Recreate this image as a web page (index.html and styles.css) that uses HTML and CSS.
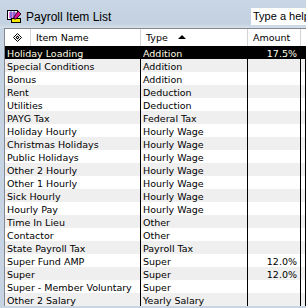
FILE: index.html
```html
<!DOCTYPE html>
<html>
<head>
<meta charset="utf-8">
<link rel="stylesheet" href="styles.css">
</head>
<body>
<div class="titlebar">
  <span class="appicon">
    <svg width="15" height="14" viewBox="0 0 15 14">
      <rect x="0.5" y="0.5" width="10" height="9" fill="#fff" stroke="#000"/>
      <path d="M2 3h7M2 5h7M2 7h5" stroke="#c000c0" stroke-width="1"/>
      <path d="M4 1v8M7 1v8" stroke="#3050d0" stroke-width="1"/>
      <rect x="4.5" y="8.5" width="9" height="4" fill="#f8e800" stroke="#000"/>
      <path d="M11 1l3 3-5 5-2 0 0-2z" fill="#e01090" stroke="#000" stroke-width="0.8"/>
    </svg>
  </span>
  <span class="title">Payroll Item List</span>
  <div class="help">Type a help</div>
</div>
<div class="list">
  <div class="head">
    <div class="hcell hicon">
      <svg width="9" height="9" viewBox="0 0 9 9">
        <path d="M4.5 0.5L8.5 4.5 4.5 8.5 0.5 4.5z" fill="#fff" stroke="#000"/>
        <path d="M4.5 2.5L6.5 4.5 4.5 6.5 2.5 4.5z" fill="#000"/>
        <rect x="4" y="4" width="1" height="1" fill="#fff"/>
      </svg>
    </div>
    <div class="hcell">Item Name</div>
    <div class="hcell">Type<span class="sortup"></span></div>
    <div class="hcell">Amount</div>
    <div class="hcell last"></div>
  </div>
  <div class="row sel"><div class="c">Holiday Loading</div><div class="c">Addition</div><div class="c amt">17.5%</div><div class="c"></div></div>
  <div class="row"><div class="c">Special Conditions</div><div class="c">Addition</div><div class="c amt"></div><div class="c"></div></div>
  <div class="row"><div class="c">Bonus</div><div class="c">Addition</div><div class="c amt"></div><div class="c"></div></div>
  <div class="row"><div class="c">Rent</div><div class="c">Deduction</div><div class="c amt"></div><div class="c"></div></div>
  <div class="row"><div class="c">Utilities</div><div class="c">Deduction</div><div class="c amt"></div><div class="c"></div></div>
  <div class="row"><div class="c">PAYG Tax</div><div class="c">Federal Tax</div><div class="c amt"></div><div class="c"></div></div>
  <div class="row"><div class="c">Holiday Hourly</div><div class="c">Hourly Wage</div><div class="c amt"></div><div class="c"></div></div>
  <div class="row"><div class="c">Christmas Holidays</div><div class="c">Hourly Wage</div><div class="c amt"></div><div class="c"></div></div>
  <div class="row"><div class="c">Public Holidays</div><div class="c">Hourly Wage</div><div class="c amt"></div><div class="c"></div></div>
  <div class="row"><div class="c">Other 2 Hourly</div><div class="c">Hourly Wage</div><div class="c amt"></div><div class="c"></div></div>
  <div class="row"><div class="c">Other 1 Hourly</div><div class="c">Hourly Wage</div><div class="c amt"></div><div class="c"></div></div>
  <div class="row"><div class="c">Sick Hourly</div><div class="c">Hourly Wage</div><div class="c amt"></div><div class="c"></div></div>
  <div class="row"><div class="c">Hourly Pay</div><div class="c">Hourly Wage</div><div class="c amt"></div><div class="c"></div></div>
  <div class="row"><div class="c">Time In Lieu</div><div class="c">Other</div><div class="c amt"></div><div class="c"></div></div>
  <div class="row"><div class="c">Contactor</div><div class="c">Other</div><div class="c amt"></div><div class="c"></div></div>
  <div class="row"><div class="c">State Payroll Tax</div><div class="c">Payroll Tax</div><div class="c amt"></div><div class="c"></div></div>
  <div class="row"><div class="c">Super Fund AMP</div><div class="c">Super</div><div class="c amt">12.0%</div><div class="c"></div></div>
  <div class="row"><div class="c">Super</div><div class="c">Super</div><div class="c amt">12.0%</div><div class="c"></div></div>
  <div class="row"><div class="c">Super - Member Voluntary</div><div class="c">Super</div><div class="c amt"></div><div class="c"></div></div>
  <div class="row"><div class="c">Other 2 Salary</div><div class="c">Yearly Salary</div><div class="c amt"></div><div class="c"></div></div>
</div>
</body>
</html>
```

FILE: styles.css
```css
html, body {
  margin: 0;
  padding: 0;
}
body {
  width: 306px;
  height: 308px;
  overflow: hidden;
  background: #c6d4e3;
  font-family: "DejaVu Sans", sans-serif;
}
.titlebar {
  box-sizing: border-box;
  height: 28px;
  padding-top: 5px;
  padding-left: 7px;
  display: flex;
  align-items: center;
  background: linear-gradient(#c9d6e4, #c3d1e0 85%, #d6e0ea);
}
.appicon {
  display: flex;
  width: 15px;
  height: 14px;
}
.title {
  margin-left: 4px;
  font-family: "Liberation Sans", sans-serif;
  font-size: 12px;
  color: #000;
}
.help {
  margin-left: auto;
  box-sizing: border-box;
  width: 55px;
  height: 17px;
  background: #fff;
  font-family: "Liberation Sans", sans-serif;
  font-size: 11px;
  line-height: 17px;
  padding-left: 2px;
  white-space: nowrap;
  overflow: hidden;
}
.list {
  margin-left: 4px;
  border-top: 1px solid #828790;
  border-left: 1px solid #828790;
  background: #fff;
  font-size: 9.5px;
  color: #000;
}
.head {
  display: grid;
  grid-template-columns: 26px 110px 107px 53px 1fr;
  height: 17px;
  background: #fff;
}
.hcell {
  box-sizing: border-box;
  border-right: 1px solid #d5d5d5;
  padding-left: 5px;
  line-height: 16px;
  white-space: nowrap;
  display: flex;
  align-items: center;
}
.hcell.hicon {
  padding-left: 0;
  justify-content: center;
}
.hcell.last {
  border-right: none;
}
.sortup {
  display: inline-block;
  width: 0;
  height: 0;
  margin-left: 10px;
  margin-top: -1px;
  border-left: 4px solid transparent;
  border-right: 4px solid transparent;
  border-bottom: 4px solid #000;
}
.row {
  display: grid;
  grid-template-columns: 136px 107px 53px 1fr;
  height: 13px;
  background: #fff;
}
.row:nth-child(odd) {
  background: #efefef;
}
.row.sel {
  background: #000;
  color: #fffbe4;
}
.c {
  box-sizing: border-box;
  border-right: 1px solid #000;
  padding-left: 2px;
  padding-top: 2px;
  line-height: 11px;
  white-space: nowrap;
}
.c.amt {
  text-align: right;
  padding-left: 0;
  padding-right: 3px;
}
```
